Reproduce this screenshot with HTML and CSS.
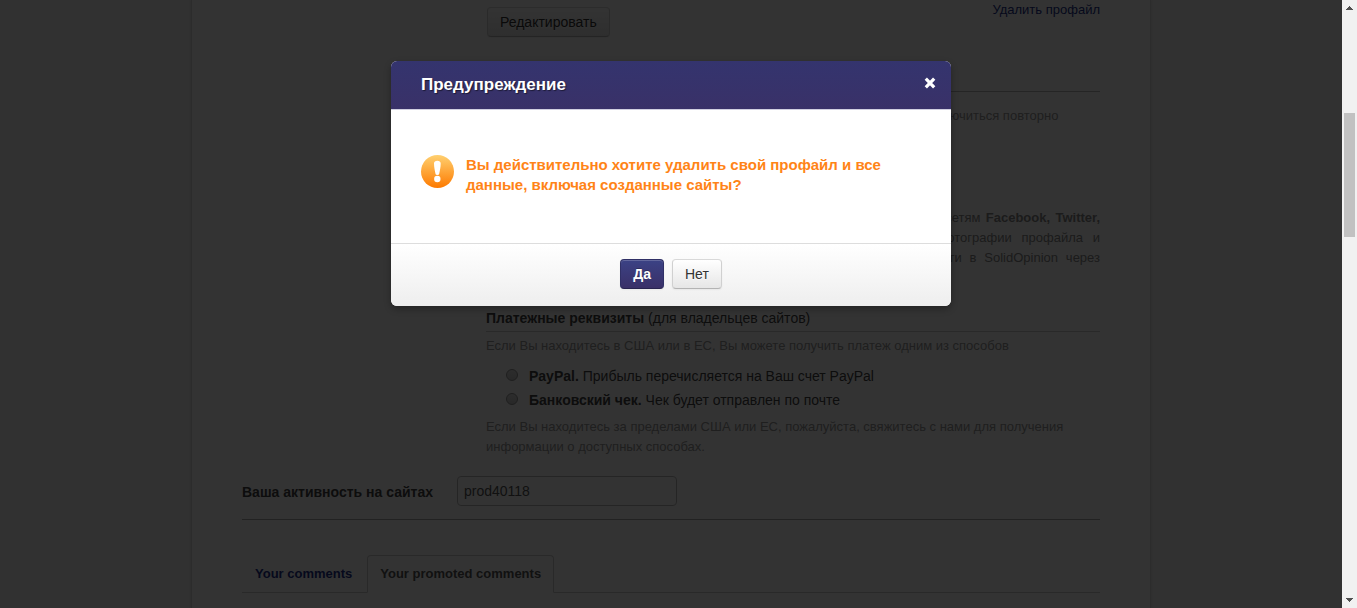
FILE: index.html
```
<!DOCTYPE html>
<html lang="ru">
<head>
<meta charset="utf-8">
<title>Профайл</title>
<link rel="stylesheet" href="styles.css">
</head>
<body>
<div class="window">
  <div class="viewport">
    <main class="page">
      <section class="profile">
        <div class="toolbar">
          <button class="btn" type="button">Редактировать</button>
          <a class="delete-link" href="#delete">Удалить профайл</a>
        </div>
        <p class="hint subscription">Вы сможете отписаться от рассылки новостей и уведомлений и потом подключиться повторно</p>
        <p class="hint social">
          Вы сможете быстро привязать свой профайл SolidOpinion к социальным сетям <b>Facebook, Twitter,</b><br>
          Google+ и другим сетям, чтобы сразу использовать Ваше имя и фотографии профайла и<br>
          публиковать новые комментарии от своего имени. Можно быстрее войти в SolidOpinion через
        </p>
        <h2 class="section-title">Платежные реквизиты <span class="note">(для владельцев сайтов)</span></h2>
        <p class="hint">Если Вы находитесь в США или в ЕС, Вы можете получить платеж одним из способов</p>
        <div class="options">
          <label class="option"><input class="radio" type="radio" name="payment"><span><b>PayPal.</b> Прибыль перечисляется на Ваш счет PayPal</span></label>
          <label class="option"><input class="radio" type="radio" name="payment"><span><b>Банковский чек.</b> Чек будет отправлен по почте</span></label>
        </div>
        <p class="hint">Если Вы находитесь за пределами США или ЕС, пожалуйста, свяжитесь с нами для получения информации о доступных способах.</p>
      </section>
      <div class="activity">
        <label class="activity-label" for="site">Ваша активность на сайтах</label>
        <input class="site-input" id="site" type="text" value="prod40118">
      </div>
      <nav class="tabs">
        <a class="tab" href="#comments">Your comments</a>
        <a class="tab tab-active" href="#promoted">Your promoted comments</a>
      </nav>
    </main>
    <div class="backdrop">
      <div class="modal" role="dialog" aria-labelledby="modal-title">
        <header class="modal-header">
          <h3 class="modal-title" id="modal-title">Предупреждение</h3>
          <button class="close" type="button" aria-label="Закрыть">
            <svg width="12" height="12" viewBox="0 0 12 12"><path d="M1.8 1.6 10.2 10.400M10.2 1.6 1.8 10.400" stroke="#fff" stroke-width="3.200"/></svg>
          </button>
        </header>
        <div class="modal-body">
          <svg class="warning-icon" width="33" height="33" viewBox="0 0 33 33">
            <defs><linearGradient id="amber" x1="0" y1="0" x2="0" y2="1"><stop offset="0" stop-color="#ffd070"/><stop offset="1" stop-color="#fd7a00"/></linearGradient></defs>
            <circle cx="16.500" cy="16.500" r="16.500" fill="url(#amber)"/>
            <path d="M13 8.500C13 6.800 14.300 5.800 16.300 5.800S19.700 6.800 19.700 8.500C19.700 12 18.800 16 18.100 19.200Q17.900 20 16.300 20T14.600 19.200C13.900 16 13 12 13 8.500Z" fill="#fff"/>
            <circle cx="16.300" cy="24" r="3.200" fill="#fff"/>
          </svg>
          <p class="message">Вы действительно хотите удалить свой профайл и все данные, включая созданные сайты?</p>
        </div>
        <footer class="modal-footer">
          <button class="btn btn-primary" type="button">Да</button>
          <button class="btn" type="button">Нет</button>
        </footer>
      </div>
    </div>
  </div>
  <div class="scrollbar" aria-hidden="true">
    <svg width="7" height="4" viewBox="0 0 7 4" shape-rendering="crispEdges"><path d="M3 0h1v1h1v1h1v1h1v1H0V3h1V2h1V1h1z" fill="#505050"/></svg>
    <div class="track"><div class="thumb"></div></div>
    <svg width="7" height="4" viewBox="0 0 7 4" shape-rendering="crispEdges"><path d="M0 0h7v1H6v1H5v1H4v1H3V3H2V2H1V1H0z" fill="#505050"/></svg>
  </div>
</div>
</body>
</html>
```
FILE: styles.css
```
* { box-sizing: border-box; }
body {
  margin: 0;
  font: 14px/20px "Liberation Sans", Arial, sans-serif;
  color: #555;
}
h2, h3, p { margin: 0; }

.window { display: flex; height: 100vh; }
.viewport {
  position: relative;
  flex: 1;
  overflow: hidden;
  background: #f3f3f3;
}
.page {
  max-width: 960px;
  min-height: 100%;
  margin: 0 auto;
  padding: 0 50px;
  background: #fff;
  border: solid #ddd;
  border-width: 0 1px;
  box-shadow: 0 0 3px rgba(0, 0, 0, .1);
}
.profile { padding-left: 244px; }

.btn {
  height: 30px;
  padding: 4px 12px;
  font: inherit;
  color: #333;
  text-shadow: 0 1px 1px rgba(255, 255, 255, .75);
  background: linear-gradient(#fff, #e6e6e6);
  border: 1px solid #ccc;
  border-color: #d9d9d9 #d0d0d0 #b3b3b3;
  border-radius: 4px;
  box-shadow: inset 0 1px 0 rgba(255, 255, 255, .2), 0 1px 2px rgba(0, 0, 0, .05);
}
.btn-primary {
  font-weight: bold;
  color: #fff;
  text-shadow: 0 -1px 0 rgba(0, 0, 0, .25);
  background: linear-gradient(#3b4285, #3a3068);
  border-color: #303066 #303066 #28234f;
}

.toolbar {
  display: flex;
  justify-content: space-between;
  height: 92px;
  padding: 7px 0 0 1px;
  border-bottom: 1px solid #bbb;
}
.delete-link {
  margin-top: -7px;
  font-size: 13px;
  color: #22318c;
  text-decoration: none;
}
.hint { font-size: 13px; color: #999; }
.subscription { margin: 14px 0 82px; white-space: nowrap; }
.social {
  margin-bottom: 40px;
  color: #888;
  text-align: justify;
  text-align-last: justify;
}
.section-title {
  margin-bottom: 4px;
  padding-bottom: 3px;
  font-size: 14px;
  line-height: 20px;
  border-bottom: 1px solid #ccc;
}
.note { font-weight: normal; }
.options {
  display: grid;
  gap: 4px;
  padding: 10px 0 7px 20px;
}
.option { display: flex; gap: 11px; }
.radio {
  appearance: none;
  width: 12px;
  height: 12px;
  margin: 3px 0 0;
  background: linear-gradient(#ddd, #c8c8c8);
  border: 1px solid #999;
  border-radius: 50%;
}
.profile .section-title,
.option,
.activity-label { color: #444; }

.activity {
  display: flex;
  gap: 24px;
  padding: 19px 0 13px;
  border-bottom: 1px solid #aaa;
}
.activity-label { padding-top: 6px; font-weight: bold; }
.site-input {
  width: 220px;
  height: 30px;
  padding: 4px 6px;
  font: inherit;
  color: #555;
  background: #fff;
  border: 1px solid #bbb;
  border-radius: 4px;
}

.tabs {
  display: flex;
  gap: 2px;
  margin-top: 35px;
  border-bottom: 1px solid #ccc;
}
.tab {
  margin-bottom: -1px;
  padding: 8px 12px;
  font-size: 13px;
  font-weight: bold;
  color: #22318c;
  text-decoration: none;
  border: 1px solid transparent;
  border-radius: 4px 4px 0 0;
}
.tab-active {
  color: #555;
  background: #fff;
  border-color: #ccc #ccc #fff;
}

.backdrop {
  position: absolute;
  inset: 0;
  padding-top: 61px;
  background: rgba(0, 0, 0, .8);
}
.modal {
  max-width: 560px;
  margin: 0 auto;
  overflow: hidden;
  background: #fff;
  border-radius: 6px;
  box-shadow: 0 3px 7px rgba(0, 0, 0, .3);
}
.modal-header {
  display: flex;
  align-items: center;
  justify-content: space-between;
  height: 49px;
  padding: 0 15px 0 30px;
  background: linear-gradient(#34346e, #393168);
  border-bottom: 1px solid #d0cfe0;
}
.modal-title {
  font-size: 17px;
  line-height: 24px;
  color: #fff;
  text-shadow: 1px 1px 1px rgba(0, 0, 0, .5);
}
.close {
  display: flex;
  padding: 0 0 4px;
  background: none;
  border: 0;
}
.modal-body {
  display: flex;
  gap: 12px;
  padding: 45px 30px 48px;
}
.warning-icon { flex: none; }
.message {
  font-size: 15px;
  font-weight: bold;
  line-height: 20px;
  color: #ff8417;
}
.modal-footer {
  display: flex;
  justify-content: center;
  gap: 8px;
  padding: 15px 15px 17px;
  background: linear-gradient(#fff, #eee);
  border-top: 1px solid #ddd;
}

.scrollbar {
  display: flex;
  flex-direction: column;
  align-items: center;
  width: 15px;
  padding: 6px 0;
  background: #f1f1f1;
}
.track { flex: 1; width: 11px; padding-top: 103px; }
.thumb { height: 124px; background: #c1c1c1; }
```
